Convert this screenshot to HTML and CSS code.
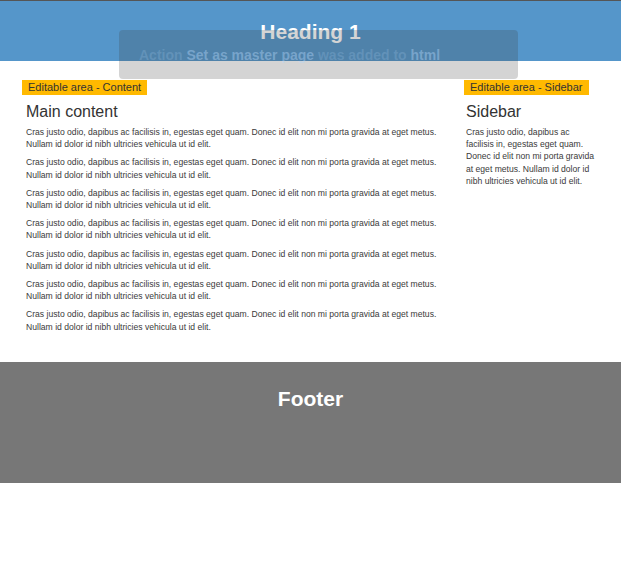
FILE: index.html
```html
<!DOCTYPE html>
<html>
<head>
<meta charset="utf-8">
<link rel="stylesheet" href="styles.css">
</head>
<body>
<header class="header"><h1>Heading 1</h1></header>
<div class="toast"><span>Action <b>Set as master page</b> was added to <b>html</b></span></div>
<main class="page">
  <section class="content">
    <div class="tag">Editable area - Content</div>
    <h2>Main content</h2>
    <p>Cras justo odio, dapibus ac facilisis in, egestas eget quam. Donec id elit non mi porta gravida at eget metus. Nullam id dolor id nibh ultricies vehicula ut id elit.</p>
    <p>Cras justo odio, dapibus ac facilisis in, egestas eget quam. Donec id elit non mi porta gravida at eget metus. Nullam id dolor id nibh ultricies vehicula ut id elit.</p>
    <p>Cras justo odio, dapibus ac facilisis in, egestas eget quam. Donec id elit non mi porta gravida at eget metus. Nullam id dolor id nibh ultricies vehicula ut id elit.</p>
    <p>Cras justo odio, dapibus ac facilisis in, egestas eget quam. Donec id elit non mi porta gravida at eget metus. Nullam id dolor id nibh ultricies vehicula ut id elit.</p>
    <p>Cras justo odio, dapibus ac facilisis in, egestas eget quam. Donec id elit non mi porta gravida at eget metus. Nullam id dolor id nibh ultricies vehicula ut id elit.</p>
    <p>Cras justo odio, dapibus ac facilisis in, egestas eget quam. Donec id elit non mi porta gravida at eget metus. Nullam id dolor id nibh ultricies vehicula ut id elit.</p>
    <p>Cras justo odio, dapibus ac facilisis in, egestas eget quam. Donec id elit non mi porta gravida at eget metus. Nullam id dolor id nibh ultricies vehicula ut id elit.</p>
  </section>
  <aside class="sidebar">
    <div class="tag">Editable area - Sidebar</div>
    <h2>Sidebar</h2>
    <p>Cras justo odio, dapibus ac facilisis in, egestas eget quam. Donec id elit non mi porta gravida at eget metus. Nullam id dolor id nibh ultricies vehicula ut id elit.</p>
  </aside>
</main>
<footer class="footer"><h2>Footer</h2></footer>
</body>
</html>
```
FILE: styles.css
```css
html, body {
  margin: 0;
  padding: 0;
  background: #fff;
  font-family: "Liberation Sans", Arial, sans-serif;
  color: #333;
}
.header {
  border-top: 1px solid #555;
  background: #5596ca;
  height: 60px;
  display: flex;
  justify-content: center;
}
.header h1 {
  margin: 20px 0 0;
  font-size: 21px;
  line-height: 22px;
  color: #fff;
  font-weight: bold;
}
.toast {
  position: absolute;
  left: 119px;
  top: 30px;
  width: 399px;
  height: 49px;
  border-radius: 4px;
  background: rgba(58, 58, 58, 0.22);
  display: flex;
  justify-content: flex-start;
  box-sizing: border-box;
  padding: 17px 0 0 20px;
}
.toast span {
  font-size: 14px;
  line-height: 16px;
  font-weight: bold;
  color: rgba(170, 205, 240, 0.22);
}
.toast b {
  color: rgba(180, 215, 250, 0.42);
}
.page {
  display: flex;
  padding: 16px 0 0 22px;
  height: 285px;
}
.content {
  width: 418px;
}
.sidebar {
  margin-left: 24px;
  width: 136px;
}
.tag {
  display: inline-block;
  background: #ffb900;
  color: #333;
  font-size: 11px;
  line-height: 15px;
  padding: 0 6px;
}
h2 {
  margin: 8px 0 5px 4px;
  font-size: 16px;
  line-height: 18px;
  font-weight: normal;
}
p {
  margin: 0 0 6px 4px;
  font-size: 8.6px;
  line-height: 12.2px;
  color: #3a3a3a;
}
.sidebar p {
  margin-left: 2px;
  width: 131px;
}
.sidebar h2 {
  margin-left: 2px;
}
.footer {
  background: #777;
  height: 121px;
  display: flex;
  justify-content: center;
}
.footer h2 {
  margin: 26px 0 0;
  color: #fff;
  font-weight: bold;
  font-size: 21px;
  line-height: 22px;
}
```
